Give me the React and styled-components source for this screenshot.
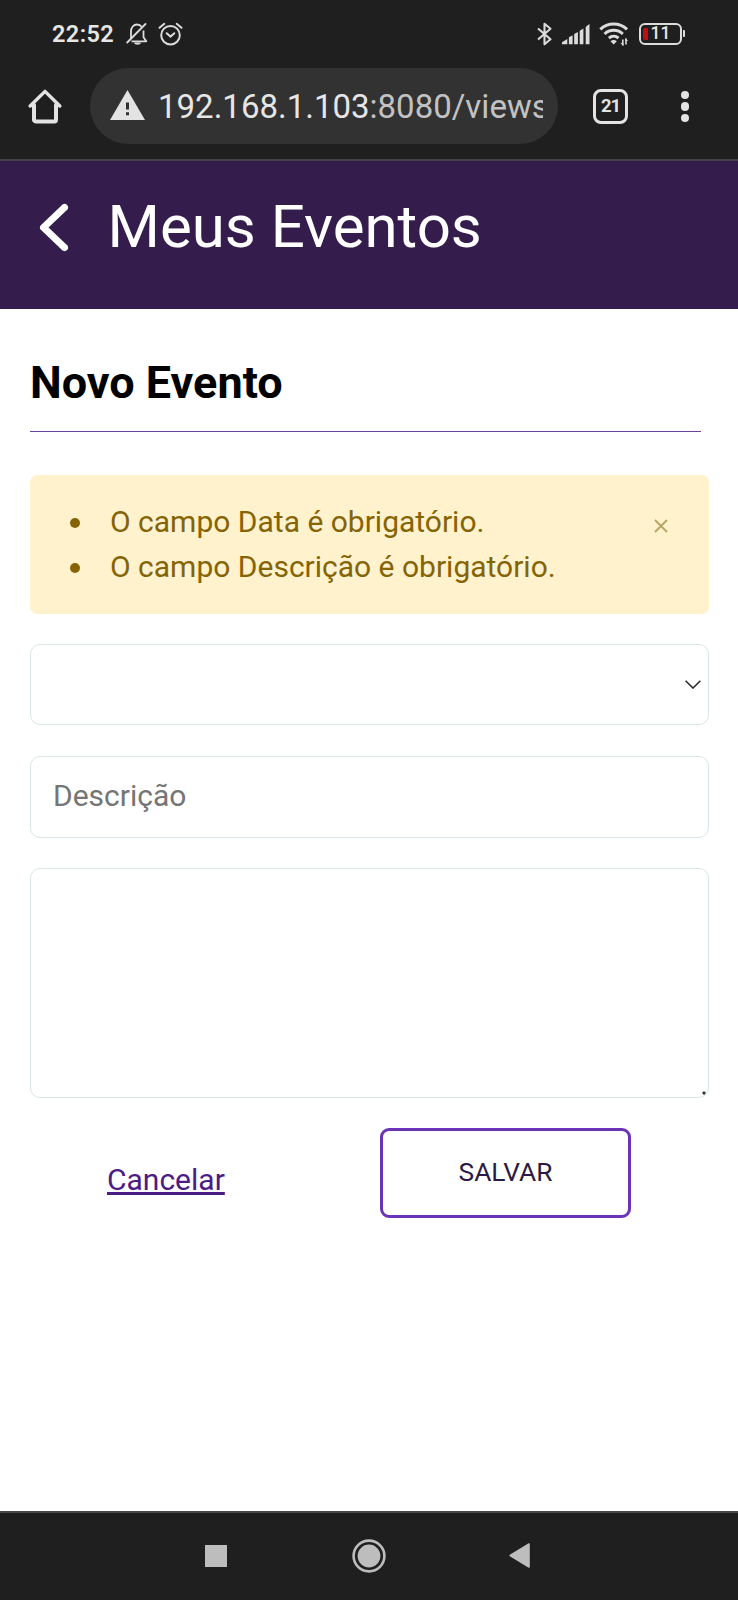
import React from "react";
import styled, { createGlobalStyle } from "styled-components";

const GlobalStyle = createGlobalStyle`
  *, *::before, *::after { box-sizing: border-box; }
  body { margin: 0; background: #fff; font-family: Roboto, "Liberation Sans", sans-serif; }
`;

const Screen = styled.div`
  width: 738px;
  height: 1600px;
  display: flex;
  flex-direction: column;
  background: #fff;
  overflow: hidden;
`;

const Icon = styled.svg`
  display: block;
  flex: none;
  width: ${(p) => p.$w}px;
  height: ${(p) => p.$h}px;
`;

const StatusBar = styled.div`
  height: 68px;
  flex: none;
  display: flex;
  justify-content: space-between;
  align-items: flex-start;
  padding: 20px 53px 0 52px;
  background: #1f1f1f;
  color: #e6e6e6;
`;

const StatusGroup = styled.div`
  display: flex;
  align-items: center;
  gap: ${(p) => p.$gap}px;
  height: 28px;
`;

const Clock = styled.span`
  width: 63px;
  font-size: 23.5px;
  font-weight: 600;
  line-height: 27px;
  letter-spacing: 0.4px;
  margin-right: 2px;
`;

const BrowserBar = styled.div`
  height: 93px;
  flex: none;
  display: flex;
  align-items: flex-start;
  padding: 0 44px 0 28px;
  background: #1f1f1f;
  border-bottom: 2px solid #454148;
`;

const HomeSlot = styled.div`
  width: 62px;
  padding-top: 21px;
`;

const AddressPill = styled.div`
  width: 468px;
  height: 76px;
  display: flex;
  align-items: center;
  padding: 0 15px 0 20px;
  border-radius: 38px;
  background: #323232;
`;

const Address = styled.span`
  flex: 1;
  min-width: 0;
  margin-left: 13px;
  padding-top: 1px;
  overflow: hidden;
  white-space: nowrap;
  font-size: 33px;
  line-height: 44px;
  color: #e6e6e6;
`;

const AddressPath = styled.span`
  color: #c2c2c2;
`;

const WarningIcon = styled(Icon)`
  margin-bottom: 2px;
`;

const TabCounter = styled.div`
  width: 35px;
  height: 35px;
  margin: 21px 0 0 35px;
  display: flex;
  align-items: center;
  justify-content: center;
  border: 3px solid #e3e3e3;
  border-radius: 8px;
  font-size: 18.5px;
  font-weight: 700;
  line-height: 1;
  letter-spacing: -1px;
  color: #e3e3e3;
`;

const MenuDots = styled.div`
  margin: 23px 0 0 53px;
  display: flex;
  flex-direction: column;
  gap: 3px;
`;

const Dot = styled.i`
  width: 8.4px;
  height: 8.4px;
  border-radius: 50%;
  background: #e3e3e3;
`;

const PageHeader = styled.header`
  height: 148px;
  flex: none;
  display: flex;
  align-items: flex-start;
  padding: 30px 0 0 38px;
  background: #341d4d;
  color: #fff;
`;

const PageTitle = styled.h1`
  margin: 0 0 0 37.5px;
  font-size: 60px;
  font-weight: 400;
  line-height: 71px;
`;

const BackIcon = styled(Icon)`
  margin-top: 12px;
`;

const Content = styled.main`
  flex: 1;
  padding: 40px 29px 0 30px;
`;

const FormTitle = styled.h2`
  margin: 0 8px 43px 0;
  height: 83px;
  padding-top: 7px;
  border-bottom: 1px solid #6f42a0;
  font-size: 45px;
  font-weight: 700;
  line-height: 54px;
  color: #000;
`;

const Alert = styled.div`
  display: flex;
  justify-content: space-between;
  align-items: flex-start;
  height: 139px;
  padding: 24px 41px 0 0;
  border-radius: 7px;
  background: #fff2cd;
  color: #856406;
`;

const ErrorList = styled.ul`
  margin: 0;
  padding: 0;
  list-style: none;
`;

const ErrorItem = styled.li`
  display: flex;
  align-items: center;
  height: 45px;
  padding-left: 39.5px;
  font-size: 30px;
  line-height: 45px;

  &::before {
    content: "";
    width: 10px;
    height: 10px;
    margin: 2px 30.5px 0 0;
    border-radius: 50%;
    background: #856406;
  }
`;

const CloseButton = styled.button`
  margin: 20px 0 0;
  padding: 0;
  border: 0;
  background: none;
`;

const Field = styled.div`
  display: flex;
  align-items: center;
  height: ${(p) => p.$h}px;
  margin-top: ${(p) => p.$mt}px;
  padding: 0 7px 0 22px;
  border: 1.5px solid #dae5e5;
  border-radius: 10px;
  background: #fff;
`;

const SelectField = styled(Field)`
  justify-content: flex-end;
`;

const TextInput = styled.input`
  flex: 1;
  padding: 0;
  margin-bottom: 3px;
  border: 0;
  outline: 0;
  background: none;
  font: 400 30px/45px Roboto, "Liberation Sans", sans-serif;
  &::placeholder { color: #757575; opacity: 1; }
`;

const AreaField = styled(Field)`
  align-items: flex-end;
  justify-content: flex-end;
  padding: 0 2px 2px 0;
`;

const Actions = styled.div`
  display: flex;
  align-items: flex-start;
  margin-top: 30px;
  padding-left: 77px;
`;

const CancelLink = styled.a`
  width: 273px;
  padding-top: 29px;
  font-size: 30px;
  line-height: 45px;
  color: #4b1c86;
  text-decoration: underline;
`;

const SaveButton = styled.button`
  width: 251px;
  height: 90px;
  padding: 0 0 3px;
  border: 3.5px solid #6b34b8;
  border-radius: 9px;
  background: #fff;
  font: 400 26.3px/40px Roboto, "Liberation Sans", sans-serif;
  color: #2b1a45;
`;

const NavBar = styled.nav`
  height: 89px;
  flex: none;
  display: flex;
  align-items: center;
  padding: 0 0 2px 205px;
  border-top: 2px solid #484848;
  background: #1f1f1f;
`;

const NavKey = styled.div`
  margin-right: ${(p) => p.$mr}px;
`;

const BellOff = () => (
  <Icon $w={23} $h={24} viewBox="0 0 23 24" fill="none" stroke="#dcdcdc" strokeWidth="1.8">
    <path d="M5 16V9.5C5 5.5 7.5 2.5 11 2.5c2 0 3.6.8 4.6 2.2M17.5 8.5v6.8l2.8 4H5.5" strokeLinejoin="round" />
    <path d="M1.2 20.5L19.5 2" strokeLinecap="round" />
    <path d="M8.5 21h6c-.6 1.6-5.4 1.6-6 0z" fill="#dcdcdc" strokeWidth="1" />
  </Icon>
);

const AlarmClock = () => (
  <Icon $w={25} $h={24} viewBox="0 0 25 24" fill="none" stroke="#dcdcdc" strokeWidth="2" strokeLinecap="round">
    <circle cx="12.5" cy="13.2" r="9.3" />
    <path d="M1.5 5.8L6.3 1.8M23.5 5.8L18.7 1.8M8.7 11.2l3.8 3.4 3.8-3.4" />
  </Icon>
);

const Bluetooth = () => (
  <Icon $w={15} $h={24} viewBox="0 0 15 24" fill="none" stroke="#dcdcdc" strokeWidth="2.1">
    <path d="M1 6.5l12.5 10.8-6 5V1.7l6 5L1 17.5" strokeLinejoin="round" />
  </Icon>
);

const Signal = () => (
  <Icon $w={28} $h={24} viewBox="0 0 28 24" fill="#dcdcdc">
    <path d="M0 22.3v-2l5.3-3.2v5.2zM6.9 22.3v-7.1l3.7-2v9.1zM12.2 22.3V12.1l3.7-2.2v12.4zM17.7 22.3V8.8l3.7-2.2v15.7zM23.7 22.3V5c1.4-1.2 2.6-2.3 3.8-3v20.3z" />
  </Icon>
);

const Wifi = () => (
  <Icon $w={30} $h={26} viewBox="0 0 30 26" fill="none" stroke="#dcdcdc" strokeWidth="3">
    <path d="M1.3 8.3c7.3-7 19.4-7 26.7 0M5.6 13c5-4.9 13.2-4.9 18.2 0M9.9 17.2c2.8-2.6 6.8-2.6 9.6 0" />
    <path d="M11.5 20.2c1.9-1.5 4.4-1.5 6.3 0L14.7 23.5z" fill="#dcdcdc" stroke="none" />
    <path d="M23.8 18.5v6M27 17.5v6" strokeWidth="1.6" />
    <path d="M21.5 22l2.8 3v-3zM29 20l-2.5-3v3z" fill="#dcdcdc" stroke="none" />
  </Icon>
);

const BatteryRow = styled.div`
  display: flex;
  align-items: center;
  gap: 1px;
  margin-bottom: 1px;
`;

const BatteryShell = styled.div`
  width: 43px;
  height: 22px;
  display: flex;
  align-items: center;
  padding-left: 2px;
  border: 2.5px solid #dcdcdc;
  border-radius: 6px;
  font-size: 17.5px;
  font-weight: 500;
  line-height: 17px;
`;

const BatteryLevel = styled.i`
  width: 5px;
  height: 12px;
  margin-right: 3px;
  border-radius: 2px 0 0 2px;
  background: #c40d12;
`;

const BatteryTip = styled.i`
  width: 2.5px;
  height: 7px;
  border-radius: 0 1px 1px 0;
  background: #dcdcdc;
`;

const errors = ["O campo Data é obrigatório.", "O campo Descrição é obrigatório."];

export default function App() {
  return (
    <Screen>
      <GlobalStyle />
      <StatusBar>
        <StatusGroup $gap={9}>
          <Clock>22:52</Clock>
          <BellOff />
          <AlarmClock />
        </StatusGroup>
        <StatusGroup $gap={9.5}>
          <Bluetooth />
          <Signal />
          <Wifi />
          <BatteryRow>
            <BatteryShell><BatteryLevel />11</BatteryShell>
            <BatteryTip />
          </BatteryRow>
        </StatusGroup>
      </StatusBar>
      <BrowserBar>
        <HomeSlot>
          <Icon $w={34} $h={35} viewBox="0 0 34 35" fill="none" stroke="#e3e3e3" strokeWidth="4" strokeLinejoin="round" strokeLinecap="round">
            <path d="M2.2 17L17 2.4 31.8 17" strokeWidth="3.4" />
            <path d="M6 16v14.8a1.6 1.6 0 0 0 1.6 1.6h18.8a1.6 1.6 0 0 0 1.6-1.6V16" />
          </Icon>
        </HomeSlot>
        <AddressPill>
          <WarningIcon $w={35} $h={31} viewBox="0 0 35 31">
            <path d="M17.5 0L35 30H0z" fill="#e3e3e3" />
            <path d="M16 12.5h3v7h-3zM16 22.3h3v3h-3z" fill="#323232" />
          </WarningIcon>
          <Address>
            192.168.1.103<AddressPath>:8080/views</AddressPath>
          </Address>
        </AddressPill>
        <TabCounter>21</TabCounter>
        <MenuDots><Dot /><Dot /><Dot /></MenuDots>
      </BrowserBar>
      <PageHeader>
        <BackIcon $w={32} $h={50} viewBox="0 0 32 50" fill="none" stroke="#fff" strokeWidth="7" strokeLinejoin="round">
          <path d="M27.5 3.5L5.5 24.5l22 21" />
          <path d="M26.8 4.2l-.8.8M26.8 44.8l-.8-.8" strokeLinecap="round" strokeWidth="6.4" />
        </BackIcon>
        <PageTitle>Meus Eventos</PageTitle>
      </PageHeader>
      <Content>
        <FormTitle>Novo Evento</FormTitle>
        <Alert>
          <ErrorList>
            {errors.map((e) => <ErrorItem key={e}>{e}</ErrorItem>)}
          </ErrorList>
          <CloseButton aria-label="Fechar">
            <Icon $w={14} $h={14} viewBox="0 0 14 14" stroke="#b9a666" strokeWidth="2">
              <path d="M1 1l12 12M13 1L1 13" />
            </Icon>
          </CloseButton>
        </Alert>
        <SelectField $h={81} $mt={30}>
          <Icon $w={16} $h={9} viewBox="0 0 16 9" fill="none" stroke="#2a2a2a" strokeWidth="1.6">
            <path d="M.6.8L8 8 15.4.8" />
          </Icon>
        </SelectField>
        <Field $h={82} $mt={31}>
          <TextInput placeholder="Descrição" />
        </Field>
        <AreaField $h={230} $mt={30}>
          <Icon $w={4} $h={4} viewBox="0 0 4 4">
            <path d="M2 0l2 2-2 2-2-2z" fill="#333" />
          </Icon>
        </AreaField>
        <Actions>
          <CancelLink>Cancelar</CancelLink>
          <SaveButton>SALVAR</SaveButton>
        </Actions>
      </Content>
      <NavBar>
        <NavKey $mr={125}>
          <Icon $w={22} $h={22} viewBox="0 0 22 22"><path d="M0 0h22v22H0z" fill="#bdbdbd" /></Icon>
        </NavKey>
        <NavKey $mr={123}>
          <Icon $w={34} $h={34} viewBox="0 0 34 34">
            <circle cx="17" cy="17" r="15.4" fill="none" stroke="#bdbdbd" strokeWidth="2.6" />
            <circle cx="17" cy="17" r="11.4" fill="#bdbdbd" />
          </Icon>
        </NavKey>
        <NavKey $mr={0}>
          <Icon $w={21} $h={25} viewBox="0 0 21 25">
            <path d="M20 1v23L1.2 12.5z" fill="#bdbdbd" stroke="#bdbdbd" strokeWidth="1.6" strokeLinejoin="round" />
          </Icon>
        </NavKey>
      </NavBar>
    </Screen>
  );
}
